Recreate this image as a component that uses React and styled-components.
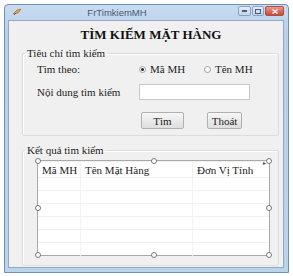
import React from 'react';
import styled, { createGlobalStyle } from 'styled-components';

const GlobalStyle = createGlobalStyle`
  body {
    margin: 0;
    background: #ffffff;
    font-family: "Liberation Serif", "Times New Roman", serif;
  }
`;

const Frame = styled.div`
  margin: 4px 0 0 4px;
  width: 285px;
  height: 269px;
  box-sizing: border-box;
  border: 1px solid #6f8fb4;
  border-radius: 4px 4px 0 0;
  background: linear-gradient(#c8dbf0, #b7cfe9 30px, #bcd3ec);
  padding: 0 4px 4px 3px;
  display: flex;
  flex-direction: column;
`;

const TitleBar = styled.div`
  height: 15px;
  display: flex;
  align-items: center;
`;

const TitleText = styled.div`
  flex: 1;
  text-align: center;
  font-family: "Liberation Sans", Arial, sans-serif;
  font-size: 9.5px;
  color: #4a5a70;
  padding-right: 26px;
`;

const CtrlGroup = styled.div`
  display: flex;
  gap: 1px;
  margin-top: -3px;
`;

const CtrlBtn = styled.div`
  width: ${p => p.$w}px;
  height: 10px;
  box-sizing: border-box;
  border: 1px solid ${p => (p.$close ? '#b24a3d' : '#8aa3c0')};
  border-radius: 2px;
  background: ${p =>
    p.$close
      ? 'linear-gradient(#e99a8c, #c8483a)'
      : 'linear-gradient(#e4edf7, #c3d4e8)'};
  display: flex;
  align-items: center;
  justify-content: center;
`;

const Client = styled.div`
  flex: 1;
  background: #f0f0f0;
  border: 1px solid #90a8c4;
  display: flex;
  flex-direction: column;
`;

const Heading = styled.h1`
  margin: 6px 0 0 0;
  text-align: center;
  font-size: 13px;
  font-weight: bold;
  color: #111;
  line-height: 16px;
  padding-left: 10px;
`;

const Group = styled.fieldset`
  margin: ${p => p.$top}px 4px 0 13px;
  padding: 0;
  height: ${p => p.$h}px;
  box-sizing: border-box;
  border: 1px solid #dcdcdc;
  border-radius: 2px;
  box-shadow: inset 1px 1px 0 #ffffff;
`;

const Legend = styled.legend`
  margin-left: 2px;
  padding: 0 2px;
  font-size: 11px;
  color: #222;
  line-height: 12px;
`;

const Row = styled.div`
  display: flex;
  align-items: center;
  height: ${p => p.$h}px;
  padding-left: 14px;
`;

const FieldLabel = styled.span`
  width: 102px;
  font-size: 11px;
  color: #222;
`;

const Radio = styled.label`
  display: flex;
  align-items: center;
  gap: 4px;
  font-size: 11px;
  color: #222;
  width: ${p => p.$w}px;
`;

const RadioDot = styled.span`
  width: 7px;
  height: 7px;
  box-sizing: border-box;
  border-radius: 50%;
  border: 1px solid #a0a0a0;
  background: #fff;
  display: flex;
  align-items: center;
  justify-content: center;
  &::after {
    content: '';
    width: 3px;
    height: 3px;
    border-radius: 50%;
    background: ${p => (p.$on ? '#222' : 'transparent')};
  }
`;

const TextBox = styled.div`
  width: 111px;
  height: 16px;
  box-sizing: border-box;
  border: 1px solid #c9c9c9;
  background: #fff;
`;

const Button = styled.div`
  width: ${p => p.$w}px;
  height: 17px;
  box-sizing: border-box;
  border: 1px solid #b0b0b0;
  border-radius: 2px;
  background: linear-gradient(#f6f6f6, #dedede);
  font-size: 11px;
  color: #222;
  display: flex;
  align-items: center;
  justify-content: center;
  margin-right: ${p => p.$mr || 0}px;
`;

const Buttons = styled.div`
  display: flex;
  padding-left: 118px;
  margin-top: 7px;
`;

const ListWrap = styled.div`
  position: relative;
  margin: 4px 0 0 14px;
  width: 233px;
  height: 96px;
  box-sizing: border-box;
  border: 1px solid #a8a8a8;
  background: #ffffff;
`;

const Grid = styled.div`
  height: 100%;
  display: grid;
  grid-template-columns: 43px 112px 1fr;
  grid-auto-rows: 13px;
  grid-template-rows: 17px;
  background-image: repeating-linear-gradient(
    to bottom,
    transparent 0 12px,
    #f1f1f1 12px 13px
  );
  background-position: 0 4px;
`;

const HeadCell = styled.div`
  font-size: 11px;
  color: #222;
  padding: 3px 0 0 4px;
  border-right: ${p => (p.$last ? 'none' : '1px solid #f0f0f0')};
  white-space: nowrap;
`;

const Cell = styled.div`
  border-right: ${p => (p.$last ? 'none' : '1px solid #f3f3f3')};
`;

const Handle = styled.span`
  position: absolute;
  width: 4px;
  height: 4px;
  border-radius: 50%;
  border: 1px solid #777;
  background: #fff;
  left: ${p => p.$x};
  top: ${p => p.$y};
  transform: translate(-50%, -50%);
`;

const Glyph = styled.span`
  position: absolute;
  right: 3px;
  top: -2px;
  font-size: 6px;
  color: #444;
  font-family: "DejaVu Sans", sans-serif;
`;

const handles = [
  ['0%', '0%'], ['50%', '0%'], ['100%', '0%'],
  ['0%', '50%'], ['100%', '50%'],
  ['0%', '100%'], ['50%', '100%'], ['100%', '100%'],
];

function AppIcon() {
  return (
    <svg width="10" height="9" viewBox="0 0 10 9" style={{ marginLeft: 4 }}>
      <path d="M1 6 L5 2 L9 1 L6 5 Z" fill="#d9a441" stroke="#9a6a1e" strokeWidth="0.6" />
      <path d="M2 7 L4 5" stroke="#6a5a8a" strokeWidth="1" />
    </svg>
  );
}

export default function App() {
  const rows = Array.from({ length: 6 });

  return (
    <>
      <GlobalStyle />
      <Frame>
        <TitleBar>
          <AppIcon />
          <TitleText>FrTimkiemMH</TitleText>
          <CtrlGroup>
            <CtrlBtn $w={13}>
              <svg width="5" height="2"><rect width="5" height="2" fill="#4a5d78" /></svg>
            </CtrlBtn>
            <CtrlBtn $w={12}>
              <svg width="6" height="5"><rect x="0.5" y="0.5" width="5" height="4" fill="none" stroke="#4a5d78" /></svg>
            </CtrlBtn>
            <CtrlBtn $w={19} $close>
              <svg width="6" height="5"><path d="M0.5 0.5 L5.5 4.5 M5.5 0.5 L0.5 4.5" stroke="#fff" strokeWidth="1.3" /></svg>
            </CtrlBtn>
          </CtrlGroup>
        </TitleBar>
        <Client>
          <Heading>TÌM KIẾM MẶT HÀNG</Heading>
          <Group $top={4} $h={89}>
            <Legend>Tiêu chí tìm kiếm</Legend>
            <Row $h={20}>
              <FieldLabel>Tìm theo:</FieldLabel>
              <Radio $w={65}><RadioDot $on />Mã MH</Radio>
              <Radio><RadioDot />Tên MH</Radio>
            </Row>
            <Row $h={26}>
              <FieldLabel>Nội dung tìm kiếm</FieldLabel>
              <TextBox />
            </Row>
            <Buttons>
              <Button $w={43} $mr={23}>Tìm</Button>
              <Button $w={35}>Thoát</Button>
            </Buttons>
          </Group>
          <Group $top={8} $h={122}>
            <Legend>Kết quả tìm kiếm</Legend>
            <ListWrap>
              <Grid>
                <HeadCell>Mã MH</HeadCell>
                <HeadCell>Tên Mặt Hàng</HeadCell>
                <HeadCell $last>Đơn Vị Tính</HeadCell>
                {rows.map((_, i) => (
                  <React.Fragment key={i}>
                    <Cell />
                    <Cell />
                    <Cell $last />
                  </React.Fragment>
                ))}
              </Grid>
              <Glyph>▸</Glyph>
              {handles.map(([x, y], i) => (
                <Handle key={i} $x={x} $y={y} />
              ))}
            </ListWrap>
          </Group>
        </Client>
      </Frame>
    </>
  );
}
